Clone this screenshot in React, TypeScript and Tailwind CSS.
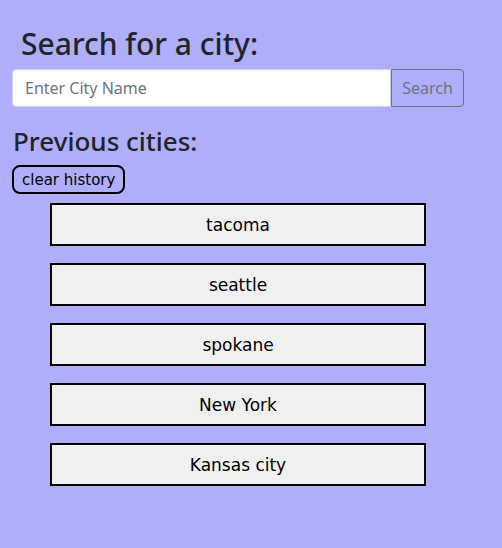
import React from "react";

const cities = ["tacoma", "seattle", "spokane", "New York", "Kansas city"];

function App() {
  return (
    <div className="min-h-[548px] w-full bg-[#aeaefa] pt-[24px] font-['Noto_Sans',sans-serif] text-[#212529]">
      <h2 className="ml-[21px] text-[30px] font-medium leading-[40px]">
        Search for a city:
      </h2>
      <form className="ml-[12px] mt-[5px] flex w-[452px] flex-row">
        <input
          type="text"
          placeholder="Enter City Name"
          className="h-[38px] w-[379px] rounded-l-[4px] border border-[#ced4da] bg-white px-3 text-[16px] text-[#495057] outline-none placeholder:text-[#6c757d]"
        />
        <button
          type="button"
          className="h-[38px] w-[73px] rounded-r-[4px] border border-[#6c757d] text-[16px] text-[#6c757d]"
        >
          Search
        </button>
      </form>
      <h3 className="ml-[13px] mt-[17px] text-[26px] font-medium leading-[34px]">
        Previous cities:
      </h3>
      <button className="ml-[12px] mt-[7px] h-[29px] rounded-[8px] border-2 border-black px-[8px] pt-[1px] font-['DejaVu_Sans',sans-serif] text-[15px] text-black">
        clear history
      </button>
      <div className="ml-[50px] mt-[9px] flex w-[376px] flex-col gap-[17px]">
        {cities.map((city, index) => (
          <button
            key={index}
            className="h-[43px] w-full border-2 border-black bg-[#f0f0f0] pt-[2px] font-['DejaVu_Sans',sans-serif] text-[17px] text-black"
          >
            {city}
          </button>
        ))}
      </div>
    </div>
  );
}

export default App;
